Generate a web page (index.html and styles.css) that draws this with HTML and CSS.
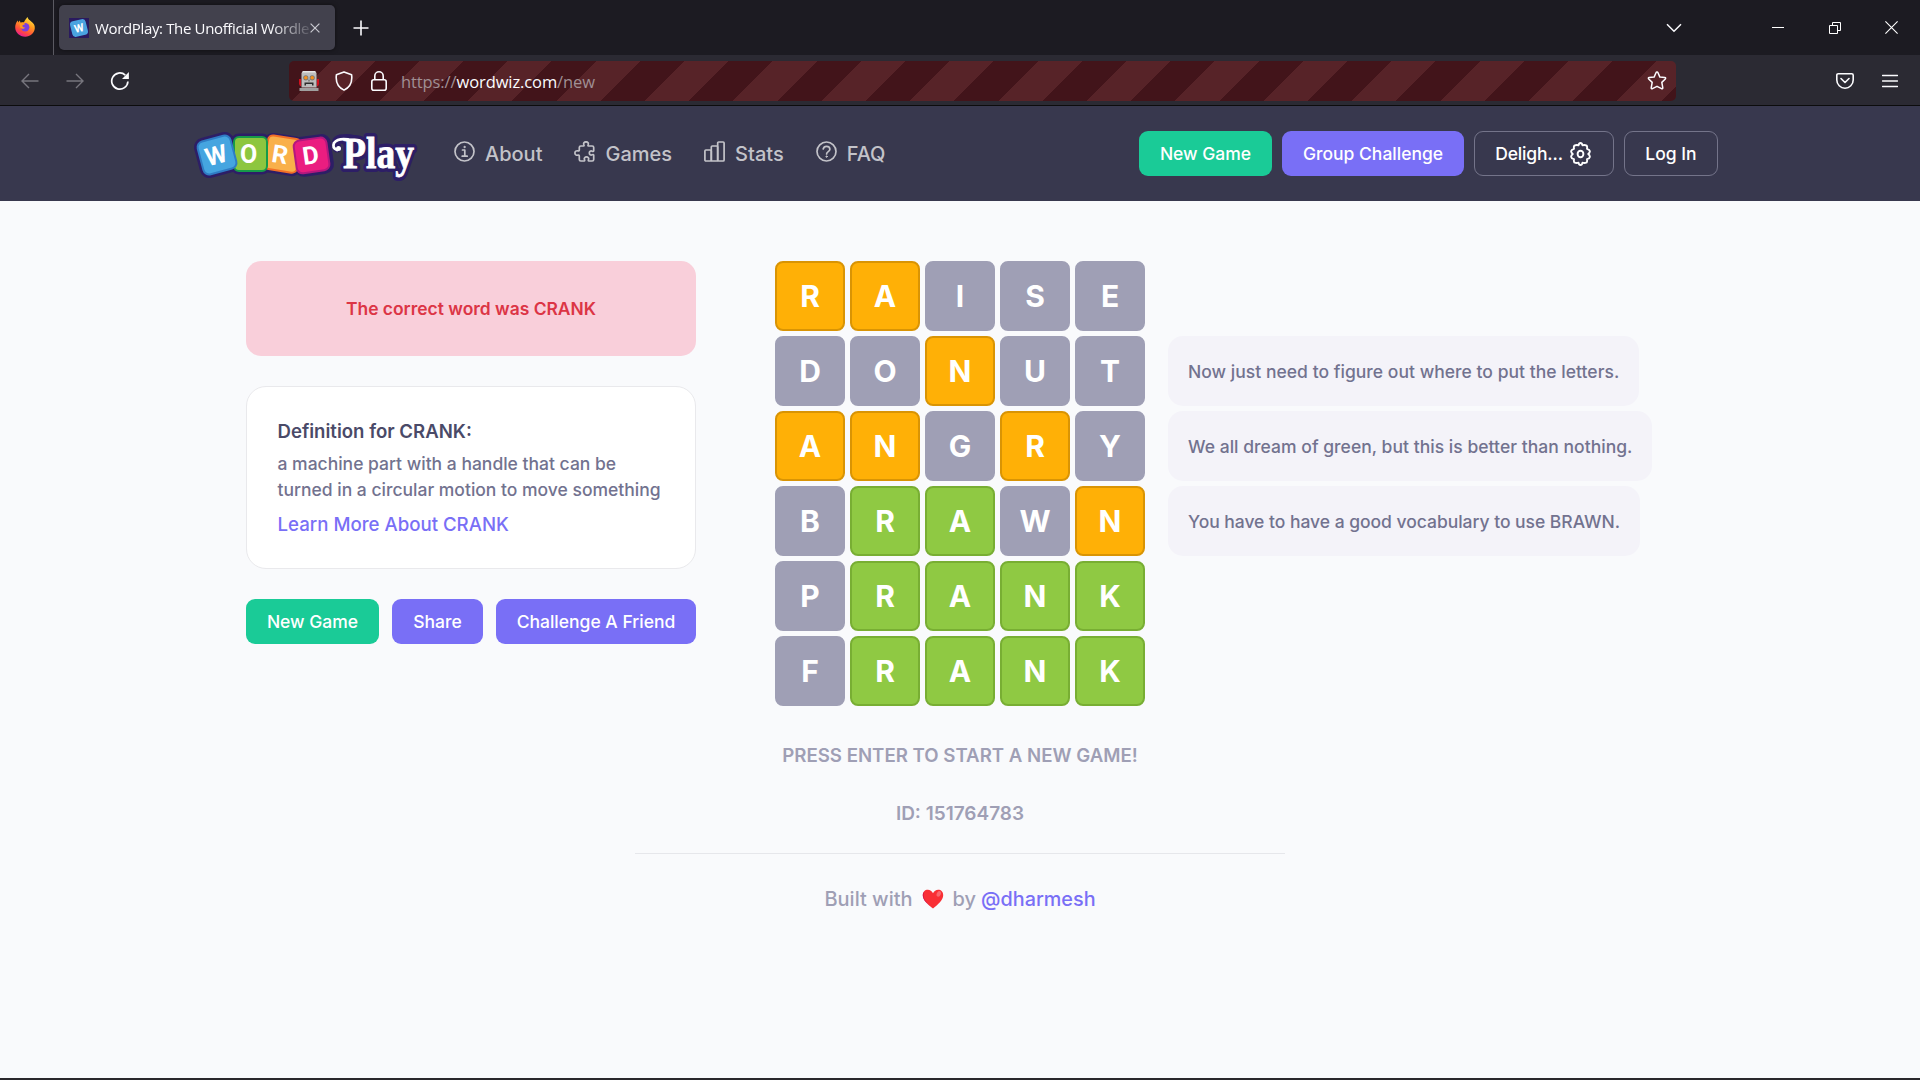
FILE: index.html
```
<!DOCTYPE html>
<html lang="en">
<head>
<meta charset="utf-8">
<title>WordPlay: The Unofficial Wordle</title>
<link rel="stylesheet" href="styles.css">
</head>
<body>
<header class="tabbar">
  <div class="pinned">
    <svg width="20" height="20" viewBox="0 0 20 20">
      <defs>
        <linearGradient id="fox" x1=".8" y1="0" x2=".3" y2="1"><stop offset="0" stop-color="#fff04a"/><stop offset=".4" stop-color="#ff9a1e"/><stop offset=".75" stop-color="#ff4a3f"/><stop offset="1" stop-color="#e6189a"/></linearGradient>
      </defs>
      <path d="M12.4 0c.5 2 2 3 3.500 4.300C18.500 6.300 20 8 19.800 11.200 19.500 16 15.300 19.700 10.200 19.700 4.600 19.700.2 15.600.2 10.300c0-2.500.8-5 2.600-6.800l.6 2 1.200-2 1.200 2.200c1-.5 1.800-.6 3.200-.4C9.600 3.500 11 2 12.400 0z" fill="url(#fox)"/>
      <circle cx="10.200" cy="10.200" r="4.200" fill="#7b3fe0"/>
      <path d="M4.500 6.500c2-1.300 4.400-.8 5.800.6l-3 1.400c.2 1.500 1.300 2.100 2.900 2-1 1.500-3.400 1.700-4.800.3z" fill="#ff9a1e"/>
    </svg>
  </div>
  <div class="tab">
    <svg class="favicon" width="20" height="20" viewBox="0 0 20 20"><rect width="20" height="20" fill="#2a1a5e"/><rect x="2" y="2" width="16" height="16" rx="3.500" fill="#4aa3e0" transform="rotate(-14 10 10)"/><text x="10" y="14" text-anchor="middle" class="favletter" transform="rotate(-14 10 10)">W</text></svg>
    <span class="tabtitle">WordPlay: The Unofficial Wordle</span>
    <svg class="tabclose" width="10" height="10" viewBox="0 0 10 10"><path d="M.6.6l8.800 8.800M9.400.6L.6 9.400" stroke="#c9c9d0" stroke-width="1.200"/></svg>
  </div>
  <svg class="plus" width="16" height="16" viewBox="0 0 16 16"><path d="M8 .5v15M.5 8h15" stroke="#fbfbfe" stroke-width="1.600"/></svg>
  <div class="winbtns">
    <svg width="16" height="10" viewBox="0 0 16 10"><path d="M1 1.200l7 7 7-7" fill="none" stroke="#fbfbfe" stroke-width="1.500"/></svg>
    <svg class="wmin" width="12" height="12" viewBox="0 0 12 12"><path d="M0 5.500h12" stroke="#fff"/></svg>
    <svg class="wmax" width="12" height="12" viewBox="0 0 12 12"><path d="M.5 3.500h8v8h-8zM3.500 3.500v-3h8v8h-3" fill="none" stroke="#fff"/></svg>
    <svg class="wclose" width="13" height="13" viewBox="0 0 13 13"><path d="M.4.4l12.200 12.200M12.600.4L.4 12.600" stroke="#fff" stroke-width="1.100"/></svg>
  </div>
</header>
<div class="toolbar">
  <div class="navicons">
    <svg width="18" height="16" viewBox="0 0 18 16"><path d="M17.500 8H1M8 1L1 8l7 7" fill="none" stroke="#77767e" stroke-width="1.400"/></svg>
    <svg width="18" height="16" viewBox="0 0 18 16"><path d="M.5 8H17M10 1l7 7-7 7" fill="none" stroke="#77767e" stroke-width="1.400"/></svg>
    <svg class="reload" width="20" height="20" viewBox="0 0 20 20"><path d="M17.900 10.500a8.100 8.100 0 1 1-2.600-6.400" fill="none" stroke="#fbfbfe" stroke-width="1.700"/><path d="M18.900 1v6.900H12z" fill="#fbfbfe"/></svg>
  </div>
  <div class="urlbar">
    <svg width="20" height="20" viewBox="0 0 20 20"><path d="M0 8h2v7H1L0 13zM20 8h-2v7h1l1-2z" fill="#d0121f"/><path d="M4 0h12l1.500 2v14.500h-15V2z" fill="#bdbdbd"/><path d="M4 0h12l1 1.500H3z" fill="#e6e6e6"/><path d="M.5 17h19v3H.5z" fill="#a0a0a0"/><circle cx="6.800" cy="6.800" r="2.600" fill="#777"/><circle cx="13.200" cy="6.800" r="2.600" fill="#777"/><circle cx="6.800" cy="6.800" r="1.800" fill="#f5901d"/><circle cx="13.200" cy="6.800" r="1.800" fill="#f5901d"/><path d="M5.500 11.500h9v3H13v-1.500H7v1.500H5.500z" fill="#2d2d2d"/><path d="M9 8.500h2v2H9z" fill="#858585"/></svg>
    <svg class="shield" width="18" height="20" viewBox="0 0 18 20"><path d="M9 .9l7.600 2.900c.8 6-1.300 12.200-7.600 15.300C2.700 16 .6 9.800 1.400 3.800z" fill="none" stroke="#fbfbfe" stroke-width="1.600" stroke-linejoin="round"/></svg>
    <svg width="16" height="20" viewBox="0 0 16 20"><rect x=".8" y="8.800" width="14.400" height="10.400" rx="2" fill="none" stroke="#fbfbfe" stroke-width="1.600"/><path d="M3.800 8.500V5a4.200 4.200 0 0 1 8.400 0v3.500" fill="none" stroke="#fbfbfe" stroke-width="1.600"/></svg>
    <span class="url">https://<b>wordwiz.com</b>/new</span>
    <svg class="star" width="20" height="20" viewBox="0 0 20 20"><path d="M10 1.100q.7 0 1 .7l1.900 4.300 4.900.5q1.400.3.500 1.400L14.800 11.400l1 5.400q0 1.300-1.200.9L10 15.300l-4.600 2.400q-1.200.4-1.200-.9l1-5.400L1.700 8q-.9-1.100.5-1.400l4.900-.5L9 1.800q.3-.7 1-.7z" fill="none" stroke="#fbfbfe" stroke-width="1.500" stroke-linejoin="round"/></svg>
  </div>
  <div class="toolright">
    <svg width="18" height="16" viewBox="0 0 18 16"><path d="M2.300.8h13.400q1.500 0 1.500 1.500V7a8.200 8.200 0 0 1-16.400 0V2.300Q.8.800 2.300.8z" fill="none" stroke="#fbfbfe" stroke-width="1.600"/><path d="M5 5.500l4 4 4-4" fill="none" stroke="#fbfbfe" stroke-width="1.600" stroke-linecap="round" stroke-linejoin="round"/></svg>
    <svg width="16" height="14" viewBox="0 0 16 14"><path d="M.5 1.500h15M.5 7h15M.5 12.500h15" stroke="#fbfbfe" stroke-width="1.400" stroke-linecap="round"/></svg>
  </div>
</div>

<nav class="nav">
  <svg class="logo" width="240" height="74" viewBox="0 -10 240 74">
    <g fill="#2d1e66" stroke="#2d1e66" stroke-width="5" stroke-linejoin="round">
      <rect x="5" y="10" width="36" height="36" rx="7" transform="rotate(-15 23 28)"/>
      <rect x="39" y="9" width="35" height="36" rx="6"/>
      <rect x="71" y="10" width="35" height="35" rx="6" transform="rotate(9 88 27)"/>
      <rect x="101" y="11" width="35" height="35" rx="7" transform="rotate(-8 118 28)"/>
      <text x="149" y="41" class="script outline" textLength="71" lengthAdjust="spacingAndGlyphs">Play</text>
      <path d="M143 21q-3-7 3-9 8-1 12 0" fill="none" stroke-width="9" stroke-linecap="round"/>
    </g>
    <rect x="72" y="10" width="33" height="34" rx="5" fill="#f9b04a" stroke="#f26f26" stroke-width="2" transform="rotate(9 88 27)"/>
    <rect x="40" y="10" width="33" height="34" rx="5" fill="#8dc63f" stroke="#169a49" stroke-width="2"/>
    <rect x="6" y="11" width="34" height="34" rx="6" fill="#45a5e0" stroke="#2f7cc4" stroke-width="2" transform="rotate(-15 23 28)"/>
    <rect x="101" y="12" width="33" height="33" rx="6" fill="#ea1d80" stroke="#b3187e" stroke-width="2" transform="rotate(-8 117 28)"/>
    <g class="tiles" text-anchor="middle">
      <text x="22" y="37" transform="rotate(-15 22 28)">W</text>
      <text x="54.500" y="36">O</text>
      <text x="86" y="36" transform="rotate(9 86 27)">R</text>
      <text x="116.500" y="37" transform="rotate(-8 117 28)">D</text>
    </g>
    <text x="149" y="41" class="script face" textLength="71" lengthAdjust="spacingAndGlyphs">Play</text>
    <path d="M143 23q-5-2-3-7 4-5 14-3.500" fill="none" stroke="#fff" stroke-width="2.800" stroke-linecap="round"/>
    <circle cx="144.500" cy="21.500" r="2.500" fill="#fff"/>
  </svg>
  <div class="links">
    <a><svg width="21" height="21" viewBox="0 0 21 21"><circle cx="10.500" cy="10.500" r="9.500"/><path d="M8.500 9h2.300v6.200M8.200 15.200h5"/><circle cx="10.500" cy="6" r=".7" class="dot"/></svg>About</a>
    <a><svg width="21" height="21" viewBox="0 0 21 21"><path d="M5.300 8V6.500q0-1.500 1.500-1.500h2.700c.8 0 .6-.8.300-1.500C9.200 2 10.500.8 12 .8s2.800 1.200 2.200 2.700c-.3.700-.5 1.500.3 1.500h3.700q1.500 0 1.500 1.500v3.300c0 .8-.8.700-1.500.4-1.500-.7-2.900.3-2.900 1.800s1.400 2.500 2.900 1.800c.7-.3 1.500-.4 1.500.4v4.300q0 1.500-1.500 1.500h-3.300c-.8 0-.7-.8-.4-1.500.7-1.300-.5-2.700-2-2.700s-2.700 1.400-2 2.700c.3.700.4 1.500-.4 1.500H6.800q-1.500 0-1.500-1.500V15c0-.8-.5-1.200-1.300-.9C2.400 14.700.9 13.500.9 12s1.500-2.700 3.100-2.100c.8.300 1.300-.1 1.300-.9z"/></svg>Games</a>
    <a><svg width="21" height="21" viewBox="0 0 21 21"><rect x=".9" y="9" width="6.400" height="11" rx="1"/><rect x="7.300" y="5" width="6.400" height="15" rx="1"/><rect x="13.700" y="1" width="6.400" height="19" rx="1"/></svg>Stats</a>
    <a><svg width="21" height="21" viewBox="0 0 21 21"><circle cx="10.500" cy="10.500" r="9.500"/><path d="M7.200 8c.4-1.800 1.600-2.700 3.300-2.700 2 0 3.400 1.200 3.400 3 0 2.300-3.300 2.300-3.300 4.600"/><circle cx="10.600" cy="15.600" r=".7" class="dot"/></svg>FAQ</a>
  </div>
  <div class="actions">
    <button class="btn green w133">New Game</button>
    <button class="btn violet w182">Group Challenge</button>
    <button class="btn ghost w140">Deligh...<svg width="21" height="24" viewBox="0 0 21 24"><path d="M10.500 1Q12 1 12.500 3.300 14.500 2.500 16.700 3.600 17.500 4.800 17 6.800 19.600 7.500 19.900 9.200 19.800 10.800 18.200 12 19.800 13.200 19.900 14.800 19.600 16.500 17 17.200 17.500 19.200 16.700 20.400 14.500 21.500 12.500 20.700 12 23 10.500 23 9 23 8.500 20.700 6.500 21.500 4.300 20.400 3.500 19.200 4 17.200 1.400 16.500 1.100 14.800 1.200 13.200 2.800 12 1.200 10.800 1.100 9.200 1.400 7.500 4 6.800 3.500 4.800 4.300 3.600 6.500 2.500 8.500 3.300 9 1 10.500 1z"/><ellipse cx="10.500" cy="12" rx="2.900" ry="3.300"/></svg></button>
    <button class="btn ghost w94">Log In</button>
  </div>
</nav>

<main class="main">
  <section class="side">
    <div class="alert">The correct word was CRANK</div>
    <div class="card">
      <h2>Definition for CRANK:</h2>
      <p>a machine part with a handle that can be<br>turned in a circular motion to move something</p>
      <a>Learn More About CRANK</a>
    </div>
    <div class="sidebtns">
      <button class="btn green w133">New Game</button>
      <button class="btn violet w91">Share</button>
      <button class="btn violet w200">Challenge A Friend</button>
    </div>
  </section>
  <section class="board">
    <i class="y">R</i><i class="y">A</i><i>I</i><i>S</i><i>E</i>
    <i>D</i><i>O</i><i class="y">N</i><i>U</i><i>T</i>
    <i class="y">A</i><i class="y">N</i><i>G</i><i class="y">R</i><i>Y</i>
    <i>B</i><i class="g">R</i><i class="g">A</i><i>W</i><i class="y">N</i>
    <i>P</i><i class="g">R</i><i class="g">A</i><i class="g">N</i><i class="g">K</i>
    <i>F</i><i class="g">R</i><i class="g">A</i><i class="g">N</i><i class="g">K</i>
  </section>
  <section class="comments">
    <p>Now just need to figure out where to put the letters.</p>
    <p>We all dream of green, but this is better than nothing.</p>
    <p class="tight">You have to have a good vocabulary to use BRAWN.</p>
  </section>
</main>
<footer class="foot">
  <p class="press">PRESS ENTER TO START A NEW GAME!</p>
  <p class="gid">ID: 151764783</p>
  <hr>
  <p class="built"><span>Built with</span><svg width="22" height="20" viewBox="0 0 22 20"><path d="M11 19.500C6 15.500.8 11 .8 6.200.8 2.800 3 .8 5.800.8c2.300 0 4 1.200 5.200 3.400C12.200 2 13.900.8 16.200.8c2.800 0 5 2 5 5.400 0 4.800-5.200 9.300-10.200 13.300z" fill="#f92f35"/><path d="M3 2.500C-.5 6 2 12.500 11 19.500 4 14 .8 10.500.8 6.200.8 4.600 1.600 3.300 3 2.500z" fill="#ca0b4a"/><ellipse cx="16.800" cy="4.900" rx="2" ry="3" transform="rotate(25 16.800 4.900)" fill="#f9686e"/></svg><span>by</span><a>@dharmesh</a></p>
</footer>
<div class="edge"></div>
</body>
</html>
```
FILE: styles.css
```
*{box-sizing:border-box}
body{margin:0;height:1080px;overflow:hidden;display:flex;flex-direction:column;background:#f9fafc;font-family:Inter,"Liberation Sans",sans-serif;color:#72728f}
p,h2{margin:0}
svg{flex:none;display:block}
.tabbar{height:55px;flex:none;background:#1c1b22;display:flex;align-items:center}
.pinned{width:54px;height:55px;border-right:1px solid #5b5a62;padding:17px 0 0 15px}
.tab{width:276px;height:45px;margin-left:5px;background:#42414d;border-radius:5px;padding:0 15px 0 10px;display:flex;align-items:center;box-shadow:0 0 4px rgba(0,0,0,.5)}
.favletter{font:bold 11px Roboto,sans-serif;fill:#fff}
.tabtitle{margin-left:6px;width:215px;overflow:hidden;white-space:nowrap;font:15px "Open Sans",sans-serif;letter-spacing:-.35px;color:#fbfbfe;-webkit-mask-image:linear-gradient(90deg,#000 175px,transparent 220px);mask-image:linear-gradient(90deg,#000 175px,transparent 220px)}
.plus{margin-left:18px}
.winbtns{margin-left:auto;display:flex;align-items:center;padding-right:22px}
.wmin{margin-left:90px}
.wmax{margin-left:45px}
.wclose{margin-left:44px}
.toolbar{height:51px;flex:none;background:#2b2a33;border-bottom:1px solid #0c0c0d;padding-top:1px;display:flex;align-items:center}
.navicons{width:289px;padding-left:21px;display:flex;align-items:center;gap:27px}
.reload{margin-left:-1px}
.urlbar{width:1387px;height:40px;border-radius:5px;padding:0 9px 0 10px;display:flex;align-items:center;gap:17px;background:repeating-linear-gradient(135deg,#42141a 0 29.7px,#572328 29.7px 60.950px,#42141a 60.950px 62.500px)}
.shield{margin:0 1px 0 -1px}
.url{font:16.500px "Open Sans",sans-serif;letter-spacing:-.1px;color:#a08f94;margin-left:-3px;padding-top:1px}
.url b{font-weight:400;color:#fbfbfe}
.star{margin-left:auto}
.toolright{margin-left:auto;padding-right:22px;display:flex;align-items:center;gap:28px}
.nav{height:95px;flex:none;background:#38384e;display:flex;align-items:center;padding:0 202px 0 194px}
.tiles{font:bold 25px Roboto,sans-serif;fill:#fff}
.script{font:bold 44px "Liberation Serif",serif}
.outline{stroke-width:8px}
.face{fill:#fff;stroke:#fff;stroke-width:.8px}
.links{display:flex;gap:32px;margin-left:20px;color:#c3c3c9;font-size:20px;font-weight:500}
.links a{display:flex;align-items:center;gap:10px}
.links svg{fill:none;stroke:#c3c3c9;stroke-width:1.700;stroke-linejoin:round;stroke-linecap:round;margin-bottom:4px}
.links .dot{fill:#c3c3c9;stroke-width:1}
.actions{margin-left:auto;display:flex;gap:10px}
.btn{height:45px;border:0;border-radius:9px;padding:0;display:flex;align-items:center;justify-content:center;font:500 17.500px Inter,sans-serif;color:#fff}
.btn svg{margin:0 2px 0 7px;fill:none;stroke:#fff;stroke-width:1.900;stroke-linejoin:round}
.green{background:#1acb97}
.violet{background:#796ff6}
.ghost{background:none;border:1px solid #74748a}
.w133{width:133px}.w182{width:182px}.w140{width:140px;letter-spacing:-.15px}.w94{width:94px}.w91{width:91px}.w200{width:200px}
.main{display:flex;align-items:flex-start;padding:60px 0 0 246px}
.side{width:450px}
.alert{height:95px;border-radius:15px;background:#f9cfda;color:#dc3545;font-weight:600;font-size:17.450px;display:flex;align-items:center;justify-content:center}
.card{height:183px;margin-top:30px;border:1px solid #e9e9ec;border-radius:20px;background:#fff;padding:30px 30px 0 30.500px}
.card h2{font-size:18.600px;font-weight:600;line-height:28px;color:#4a4a68}
.card p{font-size:17.500px;font-weight:500;line-height:26px;margin-top:6px;white-space:nowrap}
.card a{display:block;font-size:18.650px;font-weight:500;line-height:28px;margin-top:7px;color:#796ff6}
.sidebtns{display:flex;gap:13px;margin-top:30px}
.board{margin-left:79px;display:grid;grid-template-columns:repeat(5,70px);grid-auto-rows:70px;gap:5px}
.board i{font:bold 30px Inter,sans-serif;color:#fff;display:flex;align-items:center;justify-content:center;background:#9f9fb5;border:2px solid #9f9fb5;border-radius:8px}
.board .y{background:#ffb006;border-color:#d99404}
.board .g{background:#8fc943;border-color:#78ae33}
.comments{margin:75px 0 0 23px;display:flex;flex-direction:column;align-items:flex-start;gap:5px}
.comments p{height:70px;border-radius:15px;background:#f4f3f9;padding:0 20px;display:flex;align-items:center;font-size:17.500px;font-weight:500;letter-spacing:.03px;white-space:nowrap}
.comments .tight{letter-spacing:-.03px}
.foot{width:650px;margin:35px auto 0;text-align:center;color:#9f9fb5}
.press,.gid{font-size:18.650px;font-weight:600;line-height:28px}
.gid{margin-top:31px;font-size:19px}
.foot hr{height:1px;border:0;background:#e6e7eb;margin:25px 0 0}
.built{margin-top:30px;display:flex;justify-content:center;align-items:center;font-size:20px;font-weight:500;line-height:30px}
.built svg{margin:0 9px}
.built a{color:#796ff6;font-weight:500;font-size:19.800px;margin-left:5px}
.edge{margin-top:auto;height:2px;flex:none;background:#2a282c}
```
